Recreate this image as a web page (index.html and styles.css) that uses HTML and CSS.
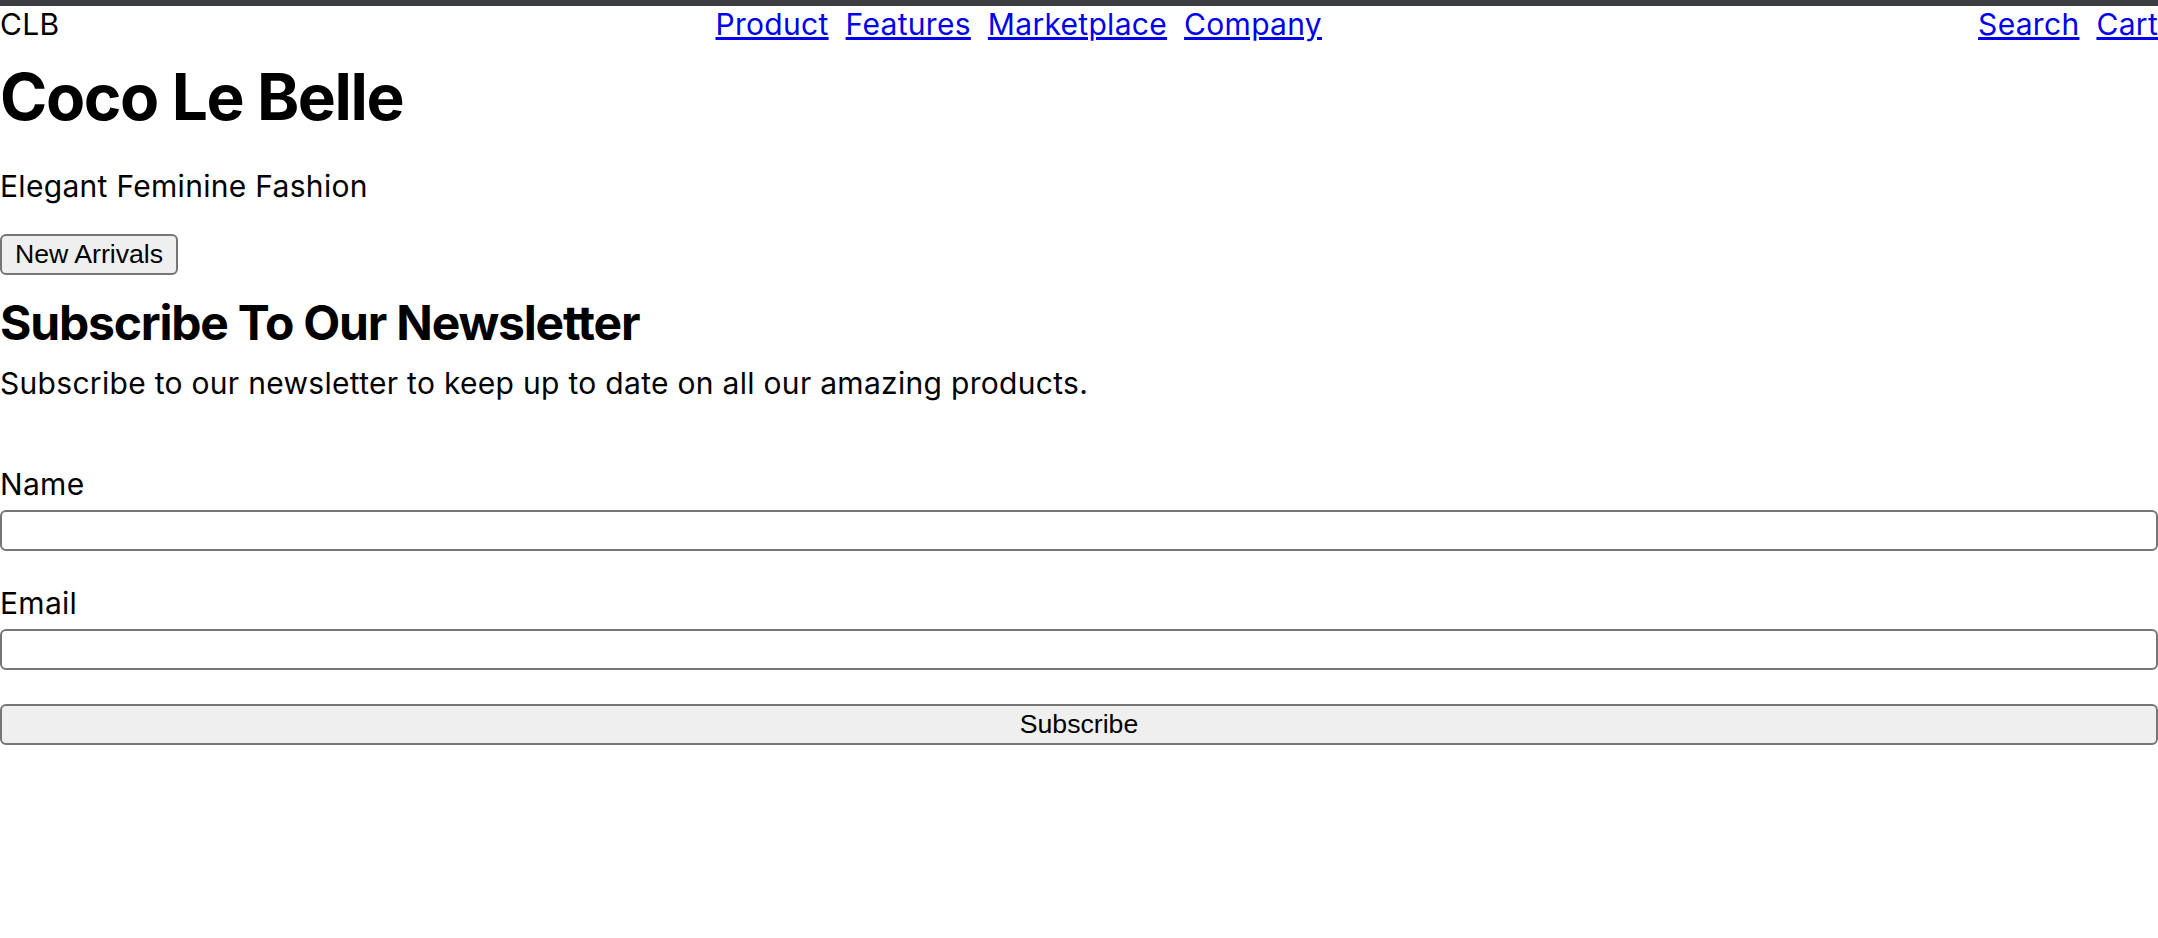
FILE: index.html
```html
<!DOCTYPE html>
<html lang="en">
<head>
    <meta charset="UTF-8">
    <meta name="viewport" content="width=device-width, initial-scale=1.0">
    <title>Coco Le Belle</title>
    <link rel="stylesheet" href="styles.css">
</head>
<body>
    <nav class="navbar">
        <span class="brand">CLB</span>
        <div class="nav-links">
            <a href="#">Product</a>
            <a href="#">Features</a>
            <a href="#">Marketplace</a>
            <a href="#">Company</a>
        </div>
        <div class="nav-links">
            <a href="#">Search</a>
            <a href="#">Cart</a>
        </div>
    </nav>

    <header class="hero">
        <h1>Coco Le Belle</h1>
        <p>Elegant Feminine Fashion</p>
        <button class="btn">New Arrivals</button>
    </header>

    <section class="newsletter">
        <h2>Subscribe To Our Newsletter</h2>
        <p>Subscribe to our newsletter to keep up to date on all our amazing products.</p>

        <form class="signup">
            <div class="field">
                <label for="name">Name</label>
                <input type="text" id="name">
            </div>
            <div class="field">
                <label for="email">Email</label>
                <input type="email" id="email">
            </div>
            <button type="submit" class="btn btn-wide">Subscribe</button>
        </form>
    </section>
</body>
</html>
```

FILE: styles.css
```css
body {
    margin: 0;
    border-top: 6px solid #3c3d41;
    font-family: Inter, 'Noto Sans', sans-serif;
    font-size: 30px;
    letter-spacing: 0.3px;
    color: #000;
    background-color: #fff;
}
.navbar {
    display: flex;
    justify-content: space-between;
    align-items: baseline;
}
.nav-links {
    display: flex;
    gap: 17px;
}
.nav-links a {
    color: #0000ee;
}
.hero h1 {
    font-size: 64px;
    letter-spacing: -1.4px;
    margin: 16px 0 0;
}
.hero p {
    margin: 33px 0 30px;
}
.btn {
    font-family: 'Liberation Sans', Arial, sans-serif;
    font-size: 26.67px;
    padding: 3px 13px;
    border: 2px solid #767676;
    border-radius: 6px;
    background-color: #efefef;
    color: #000;
}
.newsletter h2 {
    font-size: 48px;
    letter-spacing: -1.2px;
    margin: 18px 0 13px;
}
.newsletter p {
    margin: 0;
}
.signup {
    margin-top: 65px;
}
.field {
    margin-bottom: 34px;
}
.field label {
    display: block;
    margin-bottom: 8px;
}
.field input {
    display: block;
    width: 100%;
    box-sizing: border-box;
    height: 41px;
    font-size: 26.67px;
    padding: 2px 4px;
    border: 2px solid #767676;
    border-radius: 6px;
}
.btn-wide {
    display: block;
    width: 100%;
    height: 41px;
}
```
